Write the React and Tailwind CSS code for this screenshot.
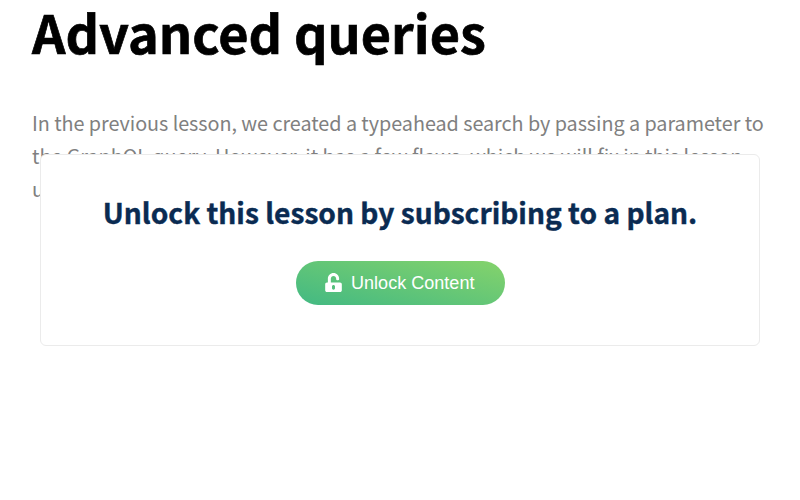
import { FaUnlockAlt } from 'react-icons/fa';

export default function App() {
  return (
    <main className="relative h-[500px] w-[800px] overflow-hidden bg-white px-8 font-['Noto_Sans_CJK_SC',sans-serif]">
      <h1 className="text-[52.2px] leading-[62px] font-bold text-black [-webkit-text-stroke:0.7px_#000]">Advanced queries</h1>
      <p className="mt-[44px] text-[19.8px] leading-[33px] tracking-[-0.045px] text-[#808080]">
        In the previous lesson, we created a typeahead search by passing a parameter to
        <br />
        the GraphQL query. However, it has a few flaws, which we will fix in this lesson
        <br />
        using
      </p>
      <section className="absolute top-[154px] left-10 flex h-[192px] w-[720px] flex-col items-center rounded-md border border-[#ebebeb] bg-white pt-[37px]">
        <h2 className="text-[28.15px] leading-[40px] font-bold text-[#0a2b52] [-webkit-text-stroke:0.4px_#0a2b52]">
          Unlock this lesson by subscribing to a plan.
        </h2>
        <button className="mt-[29px] flex h-11 w-[209px] items-center rounded-full bg-linear-[14deg,#42b983,#85d36b] pl-[29.5px] font-['Liberation_Sans',sans-serif] text-[18px] text-white">
          <FaUnlockAlt className="mr-[9px] mb-0.5 h-[19px] w-[17px] shrink-0" />
          <span className="whitespace-nowrap tracking-[0.03px]">Unlock Content</span>
        </button>
      </section>
    </main>
  );
}
